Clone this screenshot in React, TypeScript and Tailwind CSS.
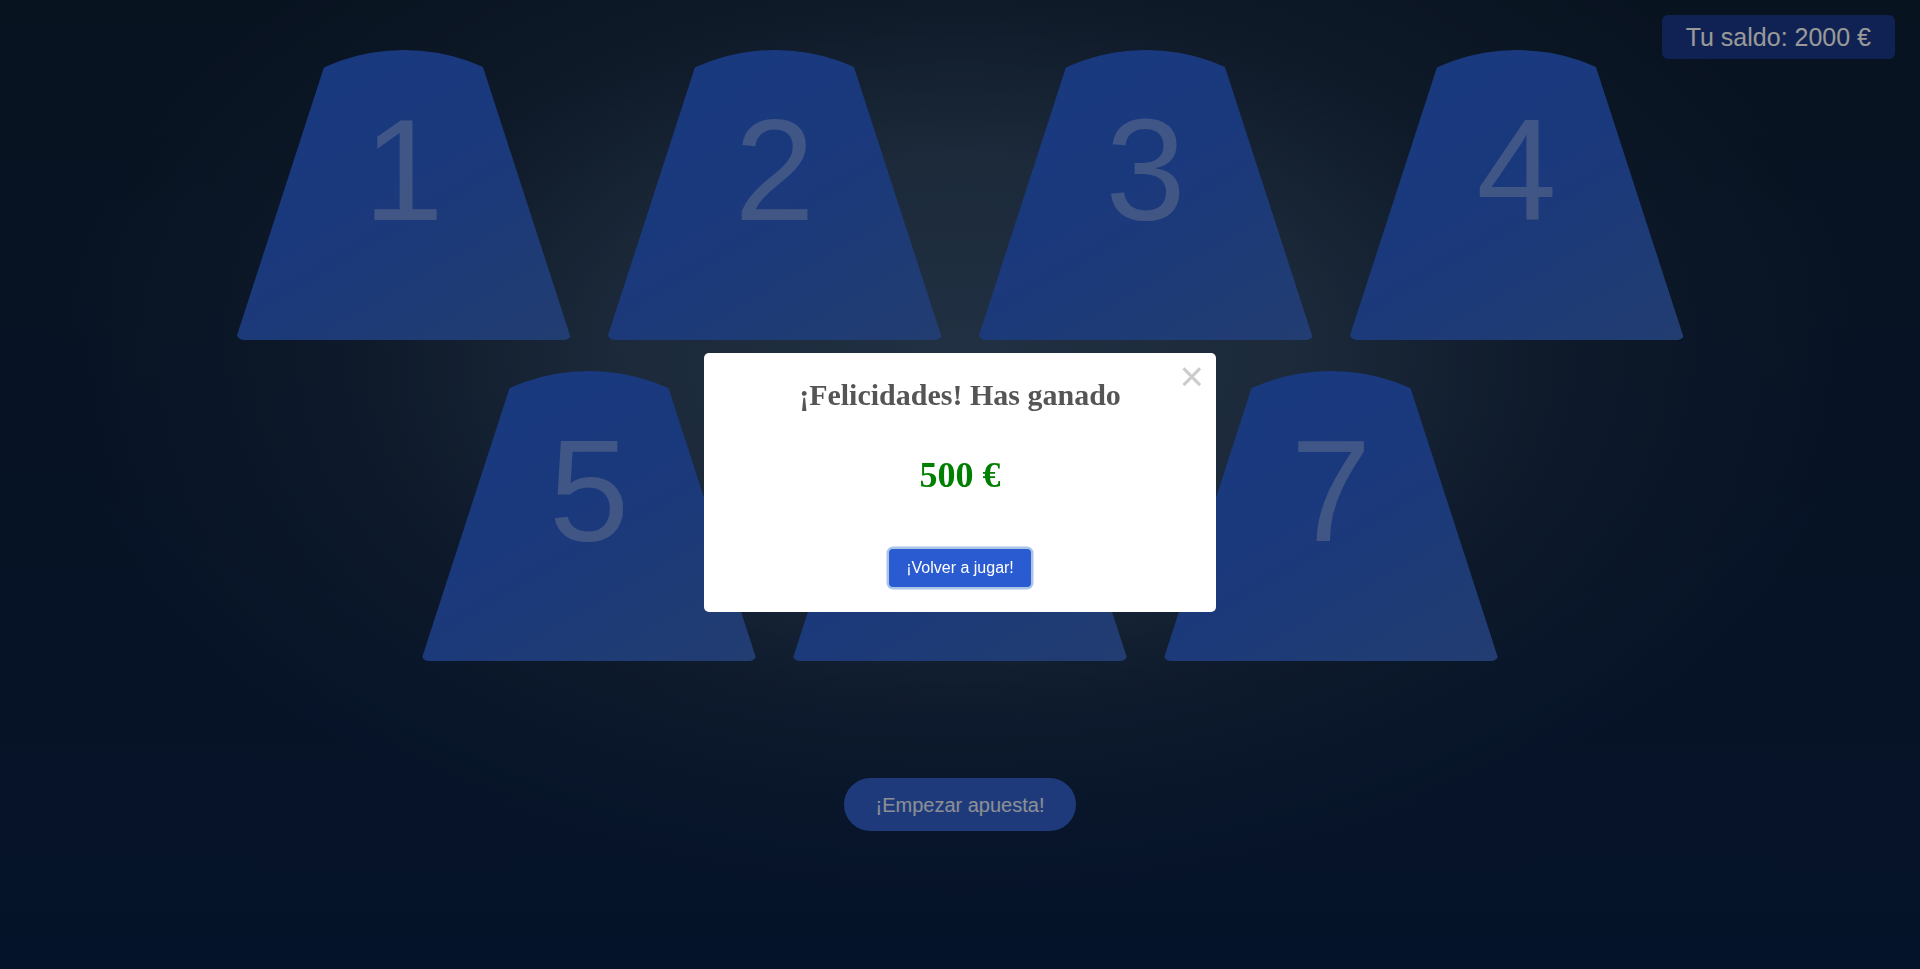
import React from "react";

function Cup({ n }: { n: number }) {
  return (
    <div className="relative w-[336px] h-[290px] bg-[linear-gradient(150deg,#2b60d6_0%,#2c5fd0_45%,#3966bc_100%)] [clip-path:polygon(28%_0%,72%_0%,100%_100%,0%_100%)] [border-radius:50%_50%_8px_8px/50%_50%_8px_8px] flex justify-center">
      <span className="pt-[49px] text-[144px] leading-none text-white/30 font-['Liberation_Sans',Arial,sans-serif]">
        {n}
      </span>
    </div>
  );
}

export default function App() {
  return (
    <div className="relative h-screen w-full overflow-hidden font-['Liberation_Sans',Arial,sans-serif] bg-[radial-gradient(ellipse_900px_540px_at_50%_37%,rgba(58,84,114,0.95)_0%,rgba(52,76,104,0.85)_38%,rgba(40,60,86,0.45)_65%,rgba(20,40,70,0)_100%),linear-gradient(to_bottom,#0e2036,#092046)]">
      <div className="flex flex-col items-center pt-[50px] gap-[31px]">
        <div className="flex gap-[35px]">
          <Cup n={1} />
          <Cup n={2} />
          <Cup n={3} />
          <Cup n={4} />
        </div>
        <div className="flex gap-[35px]">
          <Cup n={5} />
          <Cup n={6} />
          <Cup n={7} />
        </div>
        <button className="mt-[86px] h-[53px] px-[32px] rounded-full bg-[#3262cb] text-white/90 text-[20px] leading-none">
          ¡Empezar apuesta!
        </button>
      </div>

      <div className="fixed top-[15px] right-[25px] h-[44px] px-[24px] flex items-center rounded-md bg-[#19398a] text-white text-[25px] leading-none">
        Tu saldo: 2000 €
      </div>

      <div className="fixed inset-0 z-50 bg-black/40 flex items-center justify-center pb-[4px]">
        <div className="relative w-[512px] h-[259px] bg-white rounded-[5px] flex flex-col items-center pt-[24px] font-['Liberation_Serif','Times_New_Roman',serif]">
          <span className="absolute right-[12px] top-[3px] text-[42px] leading-none text-[#cccccc] font-['Liberation_Sans',Arial,sans-serif] cursor-pointer">
            ×
          </span>
          <h2 className="text-[30px] leading-[36px] font-bold text-[#555555]">
            ¡Felicidades! Has ganado
          </h2>
          <div className="mt-[42px] text-[36px] leading-[40px] font-bold text-[#008000]">
            500 €
          </div>
          <button className="mt-[54px] h-[38px] px-[17px] rounded-[4px] bg-[#2a5bd0] text-white text-[16px] leading-none font-['Liberation_Sans',Arial,sans-serif] shadow-[0_0_0_2.5px_#a9c5ea]">
            ¡Volver a jugar!
          </button>
        </div>
      </div>
    </div>
  );
}
